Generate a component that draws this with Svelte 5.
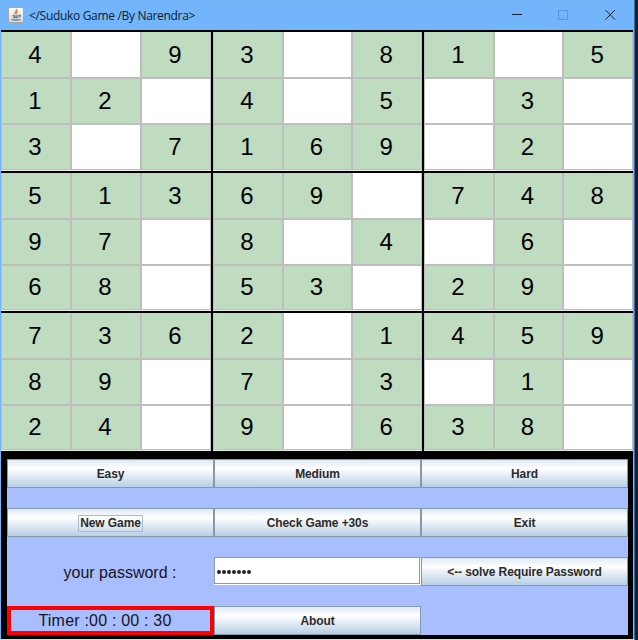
<script>
  const rows = ['409308105', '120405030', '307169020', '513690748', '970804060', '680530290', '736201459', '890703010', '240906380'];
  const blocks = Array.from({ length: 9 }, (_, b) =>
    Array.from({ length: 9 }, (_, i) => rows[Math.floor(b / 3) * 3 + Math.floor(i / 3)][(b % 3) * 3 + (i % 3)])
  );
</script>

<div class="desktop">
  <main class="window">
    <header>
      <svg class="java" width="16" height="16" viewBox="0 0 16 16">
        <defs><linearGradient id="tile" x2="0" y2="1"><stop stop-color="#fff" /><stop offset="1" stop-color="#d5d5d5" /></linearGradient></defs>
        <rect x=".5" y=".5" width="15" height="15" rx="1.5" fill="url(#tile)" stroke="#a8a8a8" />
        <path d="M8.6 1.8c1 2-3 2.7-1 5.4M9.800 4.200C7.800 5.300 8.300 6 8.800 7.200" fill="none" stroke="#e58b3d" stroke-width="1.5" />
        <path d="M4.500 8.300c1.500.7 4.800.7 6.300 0M5.300 10.200c1.300.5 3.600.5 4.800 0M3.600 12.300c2 1 6.500 1 8.800 0M11 8.200c2-.5 2 1.300-.2 1.800" fill="none" stroke="#64839a" stroke-width="1.300" />
      </svg>
      <span class="title">&lt;/Suduko Game /By Narendra&gt;</span>
      <svg class="controls" width="104" height="12" viewBox="0 0 104 12" fill="none">
        <path d="M0 5.500h10" stroke="#10202e" />
        <rect x="46.500" y="1.500" width="9" height="9" stroke="#5797d5" />
        <path d="M93.500 1l9.500 9.500M103 1l-9.500 9.500" stroke="#10202e" />
      </svg>
    </header>
    <section class="board">
      {#each blocks as block}
        <div class="block">
          {#each block as n}
            <div class="cell" class:given={n !== '0'}>{n === '0' ? '' : n}</div>
          {/each}
        </div>
      {/each}
    </section>
    <section class="panel">
      <button>Easy</button>
      <button>Medium</button>
      <button>Hard</button>
      <button><span class="focus">New Game</span></button>
      <button>Check Game +30s</button>
      <button>Exit</button>
      <div class="label">your password :</div>
      <div class="field">{#each Array(7) as _}<i></i>{/each}</div>
      <button class="solve">&lt;-- solve Require Password</button>
      <div class="timer">Timer :00 : 00 : 30</div>
      <button>About</button>
    </section>
  </main>
</div>

<style>
  .desktop {
    width: 638px;
    height: 640px;
    box-sizing: border-box;
    overflow: hidden;
    padding-right: 3px;
    background: #15202a;
    font-family: 'Liberation Sans', Arial, sans-serif;
    color: #000;
  }
  .window {
    box-sizing: border-box;
    width: 635px;
    height: 640px;
    padding: 0 1px;
    background: #73b5fb;
    border-right: 1px solid #2b6cab;
    border-bottom: 1px solid #d8dce2;
  }
  header {
    display: flex;
    align-items: center;
    height: 30px;
    padding-left: 7px;
  }
  .title {
    margin-left: 5px;
    width: 170px;
    font: 12px/16px 'Open Sans', 'Noto Sans', sans-serif;
    letter-spacing: -0.32px;
    white-space: nowrap;
    color: #10202e;
    padding-top: 1px;
  }
  .controls {
    margin-left: 313px;
  }
  .board {
    display: grid;
    width: 632px;
    height: 421px;
    box-sizing: border-box;
    padding-top: 2px;
    grid-template-columns: 210px 209px 209px;
    grid-template-rows: 139px 138px 138px;
    gap: 2px;
    background: #000;
  }
  .block {
    display: grid;
    box-sizing: border-box;
    grid-template-columns: repeat(3, 1fr);
    grid-template-rows: 45px 44px 1fr;
    gap: 2px;
    padding: 0 1px 1px;
    background: #bebebe;
    border-bottom: 1px solid #ececec;
  }
  .cell {
    display: flex;
    align-items: center;
    justify-content: center;
    background: #fff;
    font-size: 24px;
    line-height: 28px;
    padding: 1px 2px 0 0;
  }
  .cell:nth-child(n + 4) {
    padding-top: 0;
    padding-bottom: 1px;
  }
  .given {
    background: #c0dcc0;
  }
  .panel {
    display: grid;
    box-sizing: border-box;
    width: 632px;
    height: 188px;
    padding: 8px 5px 5px 6px;
    grid-template-columns: repeat(3, 207px);
    grid-template-rows: repeat(4, 29px);
    row-gap: 20px;
    background:
      linear-gradient(#a9beff, #a9beff) 6px 8px / 621px 176px no-repeat,
      #000;
  }
  button {
    display: flex;
    align-items: center;
    justify-content: center;
    margin: 0;
    padding: 1px 0 0;
    border: 1px solid #8499ab;
    border-radius: 0;
    background: linear-gradient(#dfe9f3, #fff 32%, #f1f5f9 45%, #b8cfe5);
    font: bold 12px/16px 'Liberation Sans', Arial, sans-serif;
    letter-spacing: -0.1px;
    color: #2b2b2b;
    white-space: nowrap;
  }
  .focus {
    border: 1px solid #a8bdd3;
    padding: 0 1px;
    line-height: 15px;
  }
  .label,
  .timer {
    display: flex;
    align-items: center;
    justify-content: center;
    font-size: 16px;
    color: #15151b;
  }
  .label {
    padding: 2px 0 0 19px;
  }
  .timer {
    box-sizing: border-box;
    border: 4px solid #f00;
    letter-spacing: 0.2px;
    padding: 1px 11px 0 0;
  }
  .field {
    display: flex;
    align-items: center;
    gap: 1px;
    box-sizing: border-box;
    height: 27px;
    width: 206px;
    padding: 3px 0 0 2px;
    background: #fff;
    border: 1px solid #8f9aa6;
    box-shadow: 0 1px #fff, 1px 1px #fff;
  }
  .field i {
    width: 4px;
    height: 4px;
    border-radius: 50%;
    background: #222;
  }
</style>
